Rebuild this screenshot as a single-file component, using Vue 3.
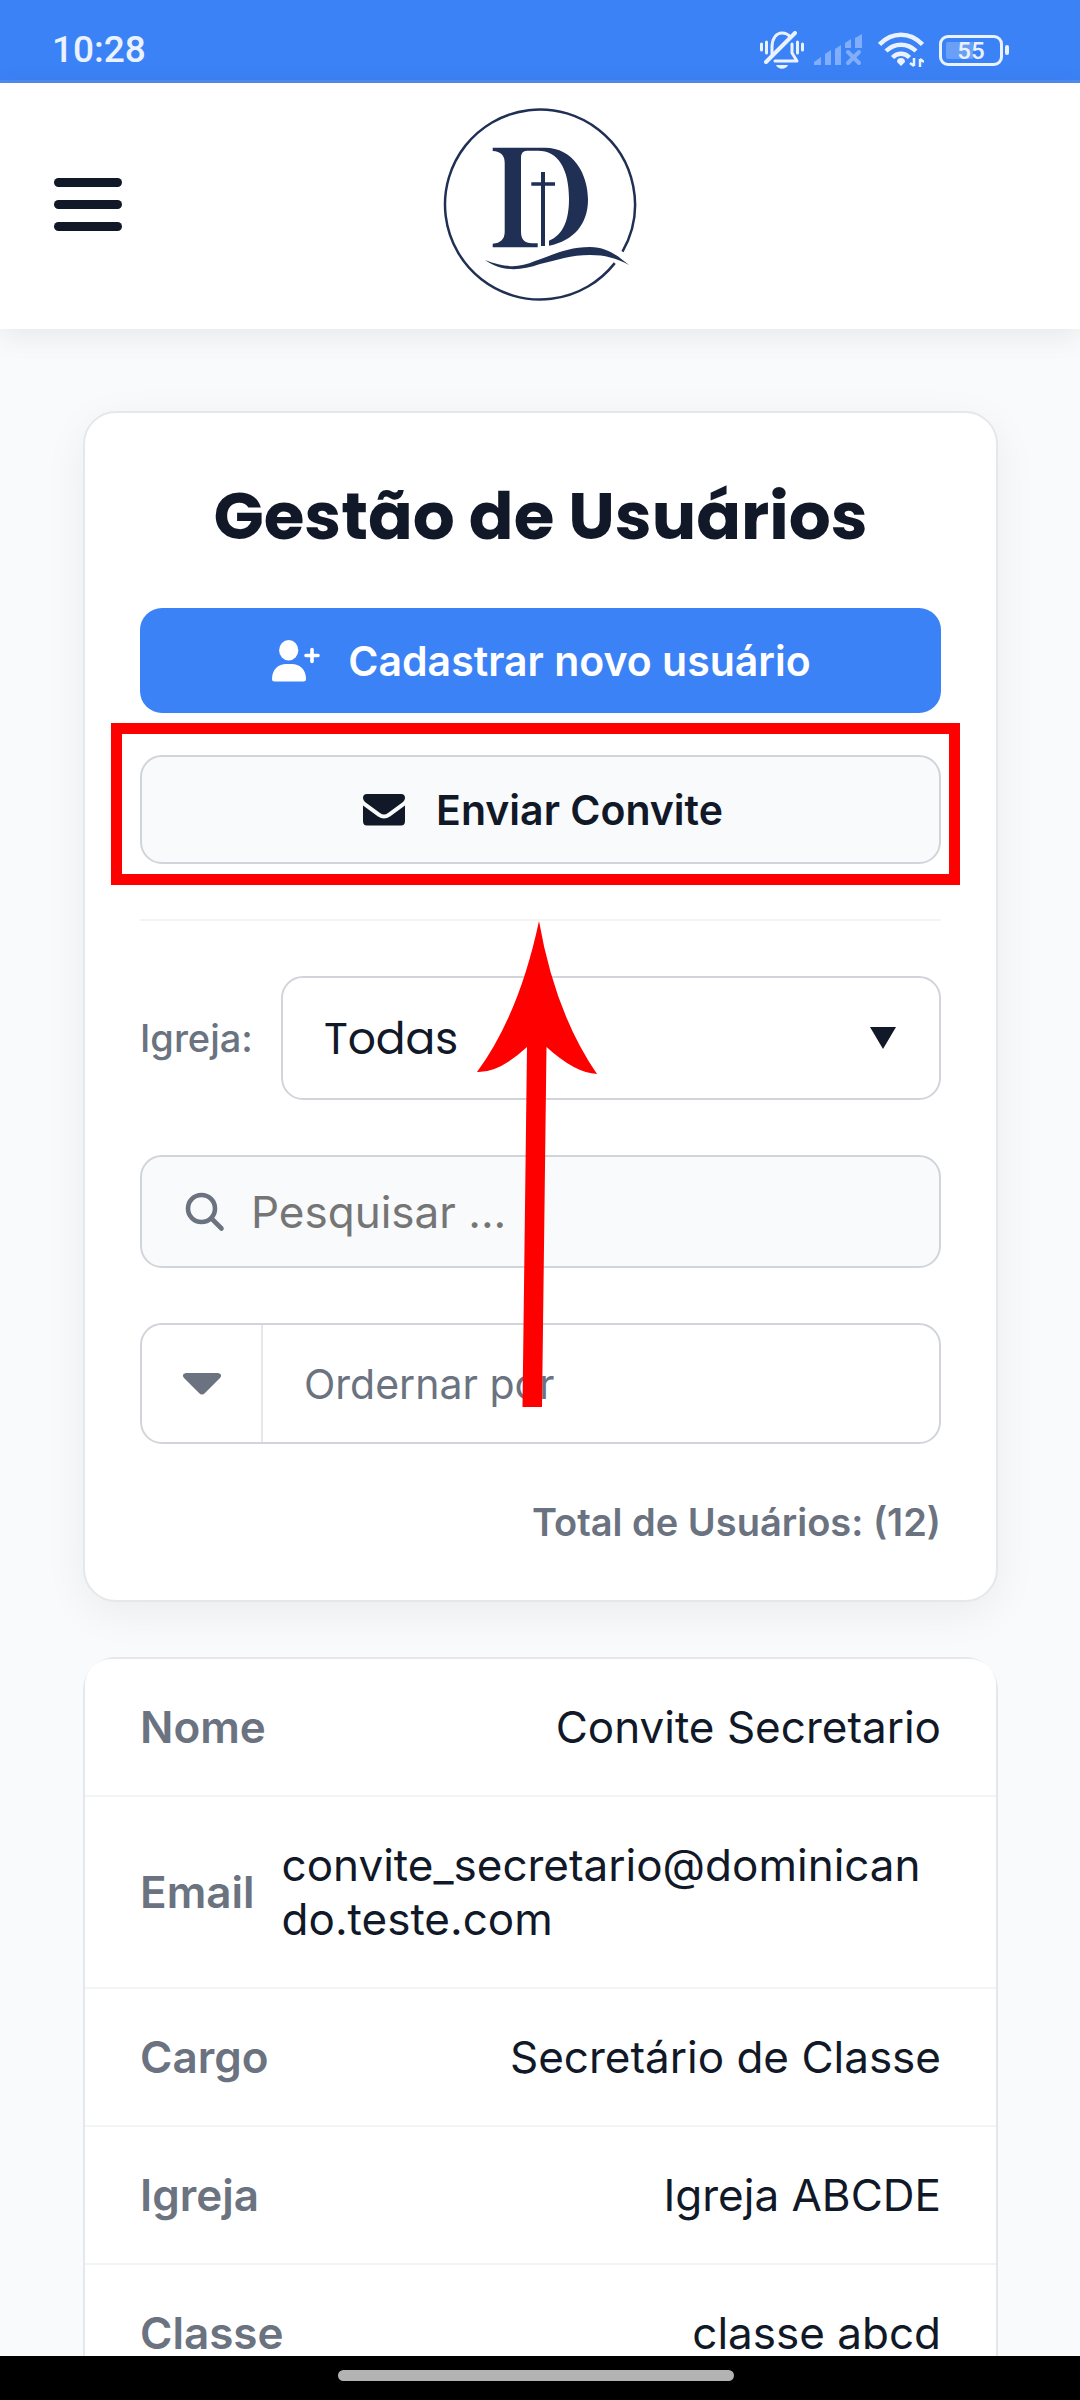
<script setup>
import { ref } from 'vue'

const igreja = ref('todas')
const busca = ref('')
const ordem = ref('')

const usuario = [
  { campo: 'Nome', valor: 'Convite Secretario' },
  { campo: 'Email', valor: 'convite_secretario@dominicando.teste.com' },
  { campo: 'Cargo', valor: 'Secretário de Classe' },
  { campo: 'Igreja', valor: 'Igreja ABCDE' },
  { campo: 'Classe', valor: 'classe abcd' },
]
</script>

<template>
  <div class="screen">
    <div class="status">
      <time class="clock">10:28</time>
      <div class="indicators">
        <svg width="44" height="38" viewBox="0 0 44 38" fill="none" stroke="#ebf2ff" stroke-linecap="round">
          <path d="M12 23V16C12 8 16 2 22 2c4 0 6 1 8 4" stroke-width="3" />
          <path d="M32 13v9l5 8H15" stroke-width="3" stroke-linejoin="round" />
          <path d="M35 2 6 31" stroke-width="4" />
          <path d="M1.500 13v6M6.500 11v11M37.500 11v11M42.500 13v6" stroke-width="3" />
          <path d="M16 34h12c-2 5-10 5-12 0z" fill="#ebf2ff" stroke="none" />
        </svg>
        <svg class="signal" width="48" height="32" viewBox="0 0 48 32" fill="#80aefa">
          <path d="M0 31v-3l7-5v8zM11 31V20l6-4v15zM21 31V15l6-4v20zM31 13V9l6-4v9h-6zM41 14V4l7-4v14z" />
          <path d="M34 18 45 29M45 18 34 29" stroke="#80aefa" stroke-width="4" stroke-linecap="round" />
        </svg>
        <svg class="wifi" width="46" height="36" viewBox="0 0 46 36" fill="none" stroke="#ebf2ff" stroke-width="4.500">
          <path d="M1.500 12.500C14-.5 32-.5 44.500 12.500M8 19c8.500-8.500 21.500-8.500 30 0M14.500 25.500c5-5 12-5 17 0" />
          <path d="M23 34l-4-4q0-4 4-4t4 4z" fill="#ebf2ff" stroke="none" />
          <path d="M36 26v8M36 34l-4-3M42 35v-8M42 27l4 3" stroke-width="2.500" />
        </svg>
        <span class="battery"><span class="level">55</span></span>
      </div>
    </div>

    <header class="topbar">
      <button class="menu" type="button" aria-label="Abrir menu"><i></i><i></i><i></i></button>
      <a class="brand" href="#" aria-label="Início">
        <svg width="194" height="194" viewBox="0 0 194 194" fill="#203054">
          <circle cx="97" cy="97.500" r="95" fill="none" stroke="#203054" stroke-width="2.500" pathLength="360" stroke-dasharray="351.600 8.400" transform="rotate(38.100 97 97.500)" />
          <path d="M49.700 40.700H102c28 0 43 26 43 52 0 24-14 41-39 46v-5c14-6 20-20 20-42 0-30-11-48-31-48H84q-6 0-6 7v74c0 8 4 11.500 11 11.500h5.700v4h-45v-3.500q12-1 12-12V56q0-11.500-12-12z" />
          <path d="M98 65h4v10.300h10v3.400h-10V139h-4V78.700h-9.700v-3.400H98z" />
          <path d="M42 153c20 8 34 8 50 1 20-7 33-14 55-14 18 0 29 10 39 18-13-7-24-10-39-10-19 0-33 5-50 9-20 7-38 8-55-4z" />
        </svg>
      </a>
    </header>

    <main class="content">
      <section class="card filters">
        <h1 class="title">Gestão de Usuários</h1>

        <button class="btn primary" type="button">
          <svg width="52" height="42" viewBox="-2 0 52 42" fill="currentColor">
            <ellipse cx="16.700" cy="10.200" rx="9.600" ry="10.200" />
            <path d="M0 39C0 29 7 24 14 24h6c7 0 14 5 14 15q0 2.500-2.500 2.500h-29Q0 41.500 0 39z" />
            <path d="M40 9.500v12M34 15.500h12" stroke="currentColor" stroke-width="3.600" stroke-linecap="round" />
          </svg>
          Cadastrar novo usuário
        </button>

        <div class="invite">
          <button class="btn secondary" type="button">
            <svg width="52" height="32" viewBox="-5 0 52 32" fill="currentColor">
              <path d="M4 0h34q4 0 4 4 0 2-2 4L25 19q-4 3-8 0L2 8Q0 6 0 4q0-4 4-4z" />
              <path d="M0 11.500 15 22.500q6 4 12 0L42 11.500V27q0 4.500-4 4.500H4Q0 31.500 0 27z" />
            </svg>
            Enviar Convite
          </button>
          <div class="marker"></div>
          <svg class="pointer" width="120" height="488" viewBox="0 0 120 488" fill="#f00">
            <path d="M62 0Q78 92 120 153 98 152 69.500 126L65 486H45.500L50 126Q22 152 0 151 42 94 62 0z" />
          </svg>
        </div>

        <hr class="rule" />

        <div class="church">
          <label for="igreja">Igreja:</label>
          <div class="select-box">
            <select id="igreja" v-model="igreja">
              <option value="todas">Todas</option>
            </select>
            <svg class="arrow" width="26" height="22" viewBox="0 0 26 22" fill="#111827"><path d="M0 0h26L13 22z" /></svg>
          </div>
        </div>

        <div class="search">
          <svg width="40" height="40" viewBox="0 0 40 40" fill="none" stroke="#6b7280" stroke-width="4.600" stroke-linecap="round">
            <circle cx="16.500" cy="16.500" r="13.500" />
            <path d="M27 27 36.500 36.500" />
          </svg>
          <input v-model="busca" type="search" placeholder="Pesquisar ..." aria-label="Pesquisar" />
        </div>

        <div class="sort">
          <button type="button" aria-label="Inverter ordem">
            <svg width="38" height="22" viewBox="0 0 38 22" fill="#6b7280"><path d="M3 0h32q5 1 2 5L22 20q-3 3-6 0L1 5Q-2 1 3 0z" /></svg>
          </button>
          <select v-model="ordem" aria-label="Ordernar por">
            <option value="">Ordernar por</option>
          </select>
        </div>

        <p class="total">Total de Usuários: (12)</p>
      </section>

      <table class="user">
        <tbody>
          <tr v-for="linha in usuario" :key="linha.campo">
            <th scope="row">{{ linha.campo }}</th>
            <td>{{ linha.valor }}</td>
          </tr>
        </tbody>
      </table>
    </main>

    <div class="navbar"><span></span></div>
  </div>
</template>

<style>
body {
  margin: 0;
  background: #f9fafc;
}
</style>

<style scoped>
* {
  box-sizing: border-box;
}
.screen {
  height: 100vh;
  display: flex;
  flex-direction: column;
  overflow: hidden;
  background: #f9fafc;
  color: #111827;
  font-family: Inter, "Noto Sans", sans-serif;
}
button,
input,
select {
  font-family: inherit;
  color: inherit;
  margin: 0;
}
svg {
  display: block;
  flex: none;
}

.status {
  flex: none;
  height: 83px;
  padding: 20px 71px 0 52px;
  display: flex;
  align-items: center;
  justify-content: space-between;
  background: #3b82f6;
  border-bottom: 3px solid #4e8cf0;
  color: #ebf2ff;
  font-family: Roboto, sans-serif;
}
.clock {
  font-size: 37px;
  line-height: 44px;
  font-weight: 500;
}
.indicators {
  display: flex;
  align-items: center;
}
.signal {
  margin-left: 10px;
}
.wifi {
  margin: 0 15px 0 16px;
}
.battery {
  display: flex;
  align-items: center;
}
.battery::after {
  content: "";
  width: 4px;
  height: 10px;
  margin-left: 2px;
  border-radius: 2px;
  background: #ebf2ff;
}
.level {
  width: 64px;
  height: 31px;
  border: 3px solid #ebf2ff;
  border-radius: 9px;
  padding: 4px;
  background: linear-gradient(90deg, #6a9ff8 55%, transparent 55%) content-box;
  font-size: 24px;
  line-height: 18px;
  font-weight: 500;
  text-align: center;
}

.topbar {
  flex: none;
  height: 246px;
  padding: 0 54px 4px;
  display: grid;
  grid-template-columns: 1fr auto 1fr;
  align-items: center;
  position: relative;
  background: #fff;
  box-shadow: 0 6px 28px rgba(0, 0, 0, 0.08);
}
.menu {
  width: 68px;
  padding: 0;
  border: 0;
  background: none;
  display: flex;
  flex-direction: column;
  gap: 13px;
}
.menu i {
  height: 9px;
  border-radius: 5px;
  background: #111827;
}

.content {
  flex: 1;
  min-height: 0;
  overflow: hidden;
  padding: 82px 82px 0 83px;
}
.card {
  padding: 55px;
  border: 2px solid #e5e7eb;
  border-radius: 33px;
  background: #fff;
  box-shadow: 0 11px 44px rgba(0, 0, 0, 0.06);
}
.title {
  margin: 0 0 44px;
  font-family: Poppins, Inter, sans-serif;
  font-size: 66px;
  line-height: 96px;
  font-weight: 700;
  text-align: center;
}
.btn {
  width: 100%;
  display: flex;
  align-items: center;
  justify-content: center;
  gap: 26px;
  border-radius: 22px;
  font-size: 41px;
  line-height: 50px;
  font-weight: 600;
}
.primary {
  height: 105px;
  border: 0;
  background: #3b82f6;
  color: #fff;
}
.secondary {
  height: 109px;
  border: 2px solid #d1d5db;
  background: #f9fafc;
}
.invite {
  position: relative;
  margin-top: 42px;
}
.marker {
  position: absolute;
  inset: -32px -19px -21px -29px;
  border: 11px solid #f00;
  pointer-events: none;
}
.pointer {
  position: absolute;
  z-index: 2;
  top: 166px;
  left: calc(50% - 64px);
  pointer-events: none;
}
.rule {
  height: 2px;
  margin: 55px 0;
  border: 0;
  background: #f3f4f6;
}
.church {
  display: flex;
  align-items: center;
  gap: 28px;
}
.church label {
  color: #6b7280;
  font-size: 38px;
  font-weight: 500;
}
.select-box {
  flex: 1;
  position: relative;
}
.select-box select {
  width: 100%;
  height: 124px;
  padding: 0 96px 0 41px;
  border: 2px solid #d1d5db;
  border-radius: 22px;
  appearance: none;
  background: #fff;
  font-family: Poppins, Inter, sans-serif;
  font-size: 44px;
}
.arrow {
  position: absolute;
  top: 51px;
  right: 45px;
  pointer-events: none;
}
.search {
  height: 113px;
  margin: 55px 0;
  padding: 0 41px 0 43px;
  display: flex;
  align-items: center;
  gap: 26px;
  border: 2px solid #d1d5db;
  border-radius: 22px;
  background: #f9fafc;
}
.search input {
  flex: 1;
  min-width: 0;
  padding: 0;
  border: 0;
  outline: 0;
  background: none;
  appearance: none;
  font-size: 44px;
}
.search input::placeholder {
  color: #757575;
}
.sort {
  height: 121px;
  display: flex;
  border: 2px solid #d1d5db;
  border-radius: 22px;
}
.sort button {
  width: 121px;
  padding: 0;
  display: flex;
  align-items: center;
  justify-content: center;
  border: 0;
  border-right: 2px solid #e5e7eb;
  background: none;
}
.sort select {
  flex: 1;
  padding: 0 41px;
  border: 0;
  appearance: none;
  background: none;
  color: #6b7280;
  font-size: 41px;
}
.total {
  margin: 55px 0 0;
  color: #6b7280;
  font-size: 38px;
  line-height: 46px;
  font-weight: 600;
  text-align: right;
}

.user {
  display: block;
  margin-top: 55px;
  border: 2px solid #e5e7eb;
  border-radius: 33px;
  background: #fff;
  font-size: 44px;
  line-height: 54px;
}
.user tbody {
  display: block;
}
.user tr {
  display: flex;
  align-items: center;
  justify-content: space-between;
  gap: 27px;
  padding: 41px 55px;
  border-bottom: 2px solid #f3f4f6;
}
.user tr:first-child {
  border-radius: 26px 26px 0 0;
  background: #fff;
}
.user th {
  padding: 0;
  color: #6b7280;
  font-weight: 600;
  text-align: left;
}
.user td {
  min-width: 0;
  padding: 0;
  overflow-wrap: anywhere;
}

.navbar {
  flex: none;
  height: 44px;
  padding: 14px 8px 0 0;
  display: flex;
  justify-content: center;
  align-items: flex-start;
  background: #000;
}
.navbar span {
  width: 37%;
  height: 11px;
  border-radius: 6px;
  background: #b3b3b3;
}
</style>
